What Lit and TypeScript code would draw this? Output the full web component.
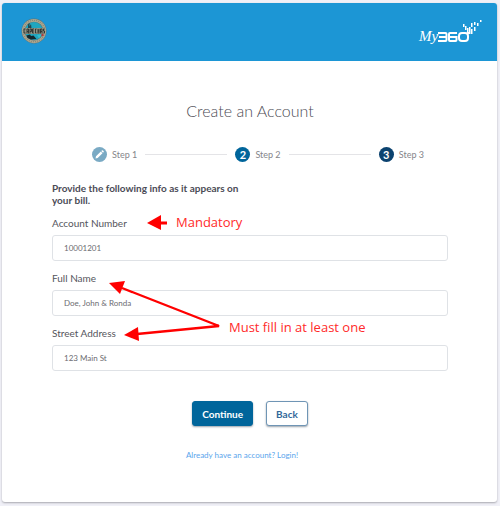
import { LitElement, html, svg, css } from "lit";
import { customElement, property } from "lit/decorators.js";

@customElement("town-seal")
class TownSeal extends LitElement {
  static styles = css`
    :host { display: block; width: 26px; height: 26px; }
    svg { display: block; width: 100%; height: 100%; }
  `;
  render() {
    return html`<svg viewBox="0 0 52 52" role="img" aria-label="Cape Charles seal">
      <circle cx="26" cy="26" r="25" fill="#56727a" />
      <circle cx="26" cy="26" r="21.5" fill="none" stroke="#aaa78f" stroke-width="5.5" />
      <circle cx="26" cy="26" r="21.5" fill="none" stroke="#8a887a" stroke-width="2.5" stroke-dasharray="2 2.2" />
      <circle cx="26" cy="26" r="18" fill="#1fa6bf" />
      <path d="M14 20 L14 13 L17 9 L17 17 L20 12 L21 20 Z" fill="#24464f" />
      <path d="M11 35 L18 33 L20 36 L25 35 L31 42 L20 43 L13 40 Z" fill="#12282e" />
      <path d="M32 34 L42 32 L36 41 Z" fill="#35bccc" />
      <rect x="4" y="20" width="44" height="12" rx="2" fill="#8e9284" />
      <path
        d="M9 22H6V30H9 M12 31V22H15V31 M12 27H15 M18 31V22H21V27H18 M26 22H23V30H26 M23 26H26 M31 22H29V30H31 M34 22V31 M34 26H36 M36 22V31 M39 31V22H42V31 M39 27H42 M47 22H45V26H47V30H45"
        fill="none" stroke="#2a3130" stroke-width="1.8" />
      <circle cx="43" cy="34" r="2.4" fill="#b5393c" />
    </svg>`;
  }
}

@customElement("brand-logo")
class BrandLogo extends LitElement {
  static styles = css`
    :host { display: block; position: relative; width: 64px; height: 28px; color: #fff; }
    .my {
      position: absolute; left: 1px; bottom: 0;
      font: italic 400 15px/20px "Liberation Serif", serif;
    }
    svg { position: absolute; inset: 0; width: 100%; height: 100%; }
  `;
  render() {
    const ticks = [
      [45, 6, 3], [47, 8, 4], [49, 10, 5], [50, 14, 2], [51, 9, 7], [53, 5, 4], [53, 11, 5],
      [56, 4, 3], [56, 9, 4], [59, 5, 3], [62, 2, 2],
    ];
    return html`<span class="my">My</span>
      <svg viewBox="0 0 64 28" role="img" aria-label="360">
        <g fill="none" stroke="#fff" stroke-width="2">
          <path d="M20 15H27.5Q28.5 15 28.5 16V22Q28.5 23 27.5 23H20 M21 19H28" />
          <path d="M39 15H32Q31 15 31 16V22Q31 23 32 23H37.5Q38.5 23 38.5 22V19H31" />
          <rect x="41" y="15" width="9" height="8" rx="3" />
        </g>
        ${ticks.map(([x, y, h]) => svg`<rect x=${x} y=${y} width="1.5" height=${h} fill="#fff" />`)}
      </svg>`;
  }
}

@customElement("step-progress")
class StepProgress extends LitElement {
  static styles = css`
    :host { display: block; }
    .steps { display: flex; align-items: center; gap: 8px; margin: 0; padding: 0; list-style: none; }
    .step { display: flex; align-items: center; gap: 5px; font-size: 9px; line-height: 15px; color: #85858a; white-space: nowrap; }
    .dot {
      display: grid; place-items: center; width: 15px; height: 15px; border-radius: 50%;
      font-size: 11px; font-weight: 700; color: #fff; background: #00659b;
    }
    .done { background: #7aaac4; }
    .last { background: #0b426f; }
    .rule { flex: 1; height: 1px; background: #e4e4e7; }
  `;
  render() {
    return html`<ol class="steps">
      <li class="step">
        <span class="dot done"><svg width="9" height="9" viewBox="0 0 9 9" aria-hidden="true">
          <path d="M0.5 8.5 L1 6.3 L5.8 1.5 L7.5 3.2 L2.7 8 Z M6.3 1 L7.1 0.3 Q7.5 0 7.9 0.4 L8.6 1.1 Q9 1.5 8.7 1.9 L8 2.7 Z" fill="#fff" />
        </svg></span>Step 1
      </li>
      <li class="rule" role="presentation"></li>
      <li class="step" aria-current="step"><span class="dot">2</span>Step 2</li>
      <li class="rule" role="presentation"></li>
      <li class="step"><span class="dot last">3</span>Step 3</li>
    </ol>`;
  }
}

@customElement("text-field")
class TextField extends LitElement {
  @property() label = "";
  @property() value = "";
  static styles = css`
    :host { display: block; }
    .label { display: block; font-size: 10px; line-height: 16px; margin-bottom: 4px; color: #55555c; }
    .input {
      display: block; box-sizing: border-box; width: 100%; height: 26px; padding: 0 11px;
      border: 1px solid #dfe2e6; border-radius: 3px; background: #fff; color: #6c6c71;
      font-family: inherit; font-size: 8px; outline: none;
    }
    .input:focus { border-color: #00659b; }
  `;
  render() {
    return html`<label class="label" for="field">${this.label}</label>
      <input class="input" id="field" type="text" .value=${this.value} />`;
  }
}

@customElement("app-root")
class AppRoot extends LitElement {
  static styles = css`
    :host {
      display: block; box-sizing: border-box; min-height: 100vh; padding: 3px 3px 4px 2px;
      background: #f0f0f7; font-family: Lato, "Noto Sans", sans-serif; color: #4b4b54;
    }
    .card {
      display: flex; flex-direction: column; min-height: calc(100vh - 7px);
      border-radius: 3px; background: #fff; overflow: hidden; box-shadow: 0 1px 2px #a9a9b0;
    }
    .bar {
      display: flex; align-items: flex-start; justify-content: space-between;
      box-sizing: border-box; height: 58px; padding: 15px 15px 0 19px; background: #1c96d5;
    }
    .content { padding: 40px 49px 38px 50px; }
    .title { margin: 0; font-size: 16px; line-height: 20px; font-weight: 300; text-align: center; color: #4b4b54; }
    .progress { margin: 26px 24px 0 40px; }
    .form { position: relative; margin-top: 20px; }
    .prompt { margin: 0 0 9px; max-width: 204px; font-size: 10px; line-height: 12px; font-weight: 700; color: #4b4b56; }
    .fields { display: grid; gap: 9px; }
    .actions { display: flex; justify-content: center; gap: 13px; margin-top: 30px; }
    .button {
      box-sizing: border-box; height: 25px; padding: 0 9px; border: 1px solid #00659b; border-radius: 3px;
      font-family: inherit; font-size: 10px; font-weight: 700; box-shadow: 0 1px 2px #9aa3ad;
    }
    .primary { background: #00659b; color: #fff; }
    .secondary { background: #fff; color: #33689a; border-color: #6f95b5; }
    .login { margin: 22px 0 0; padding-right: 16px; font-size: 8px; line-height: 14px; text-align: center; }
    .link { color: #5aa5ec; text-decoration: none; }
    .arrows { position: absolute; left: 0; top: 0; overflow: visible; pointer-events: none; }
    .note { position: absolute; font-family: "Open Sans", sans-serif; font-size: 13px; line-height: 18px; color: #ff2a2a; white-space: nowrap; pointer-events: none; }
    .mandatory { left: 124px; top: 31px; }
    .either { left: 177px; top: 136px; }
  `;
  render() {
    return html`<main class="card">
      <header class="bar"><town-seal></town-seal><brand-logo></brand-logo></header>
      <section class="content">
        <h1 class="title">Create an Account</h1>
        <step-progress class="progress"></step-progress>
        <form class="form" @submit=${(e: Event) => e.preventDefault()}>
          <p class="prompt">Provide the following info as it appears on your bill.</p>
          <div class="fields">
            <text-field label="Account Number" value="10001201"></text-field>
            <text-field label="Full Name" value="Doe, John &amp; Ronda"></text-field>
            <text-field label="Street Address" value="123 Main St"></text-field>
          </div>
          <div class="actions">
            <button class="button primary" type="submit">Continue</button>
            <button class="button secondary" type="button">Back</button>
          </div>
          <svg class="arrows" width="200" height="170" aria-hidden="true">
            <g fill="#f00" stroke="none">
              <path d="M95 41 L109 33 V48 Z" />
              <path d="M57 101 L73 99 L68 112 Z" />
              <path d="M72 153 L86 145 L87 159 Z" />
            </g>
            <path d="M108 41 H115" stroke="#f00" stroke-width="3" />
            <path d="M70 106 L167 144 L85 152" fill="none" stroke="#f00" stroke-width="2.4" />
          </svg>
          <span class="note mandatory">Mandatory</span>
          <span class="note either">Must fill in at least one</span>
        </form>
        <p class="login"><a class="link" href="#login">Already have an account? Login!</a></p>
      </section>
    </main>`;
  }
}
